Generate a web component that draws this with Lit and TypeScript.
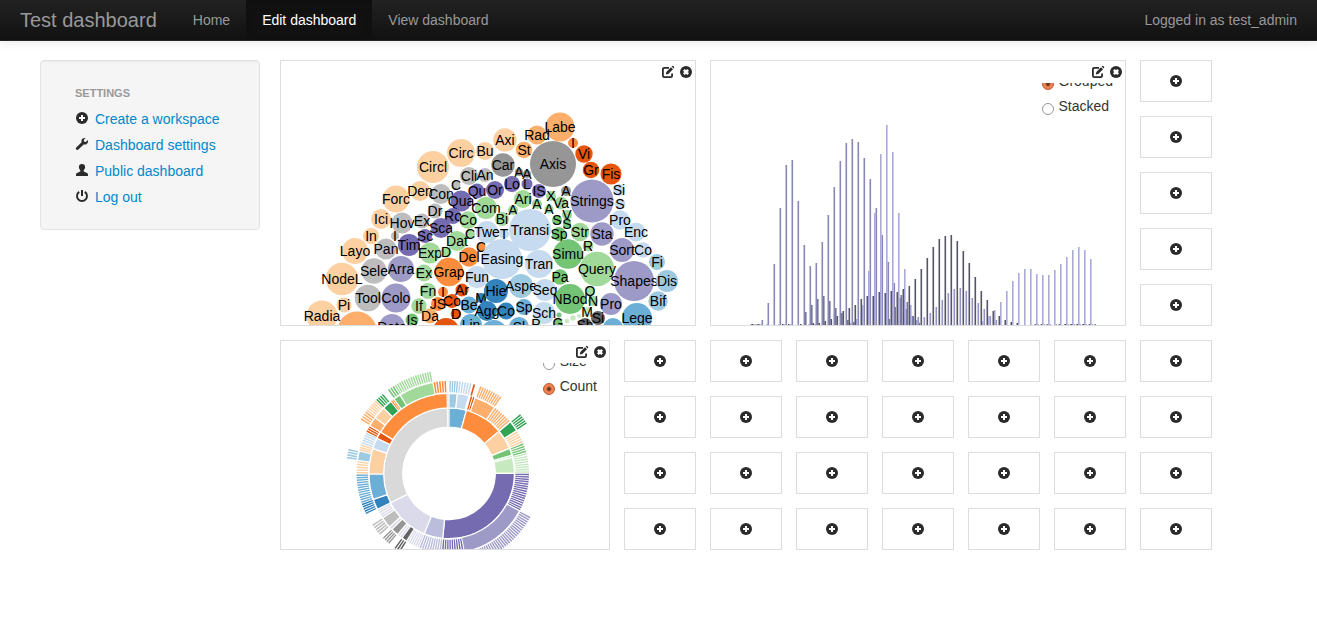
import { LitElement, html, svg, css } from "lit";
import { customElement, property } from "lit/decorators.js";

type Bubble = [string, number, number, number, string];

/* Palette: four shades each of blue, orange, green, purple and grey. */
const C: Record<string, string> = {
  b1: "#3182bd", b2: "#6baed6", b3: "#9ecae1", b4: "#c6dbef",
  o1: "#e6550d", o2: "#fd8d3c", o3: "#fdae6b", o4: "#fdd0a2",
  g1: "#31a354", g2: "#74c476", g3: "#a1d99b", g4: "#c7e9c0",
  p1: "#756bb1", p2: "#9e9ac8", p3: "#bcbddc", p4: "#dadaeb",
  k1: "#636363", k2: "#969696", k3: "#bdbdbd", k4: "#d9d9d9",
};

/* label, centre x, centre y, radius, colour */
const BUBBLES: Bubble[] = [
  ["Con", 441, 194, 10, "k3"], ["Den", 420, 191, 10, "o4"], ["Circl", 433, 167, 16, "o4"],
  ["Circ", 461, 153, 14, "o4"], ["Bu", 485, 151, 9, "o4"], ["Forc", 396, 199, 13.5, "o4"],
  ["Cli", 469, 176, 9, "k3"], ["An", 485, 175, 7, "k3"], ["C", 456, 185, 4.5, "k3"],
  ["Qu", 477, 191, 7.5, "p1"], ["Or", 495, 190, 9, "p1"], ["Qua", 461, 201, 10.5, "p1"],
  ["Com", 486, 208, 11, "g3"], ["Dr", 435, 211, 7.5, "k3"], ["Ro", 453, 216, 8, "p1"],
  ["Labe", 560, 127, 14.5, "o3"], ["Rad", 537, 135, 9.5, "o3"], ["Axi", 505, 140, 11.7, "o4"],
  ["St", 524, 150, 8.3, "o3"], ["Axis", 553, 164, 23, "k2"], ["I", 573, 143, 5, "o2"],
  ["Vi", 584, 154, 8.7, "o1"], ["Gr", 591, 170, 8.3, "o1"], ["Fis", 611, 174, 10.5, "o1"],
  ["Car", 503, 165, 11.7, "k2"], ["A", 519, 172, 4, "k2"], ["A", 527, 174, 4, "k2"],
  ["Lo", 512, 184, 8, "p1"], ["L", 527, 184, 5.5, "p1"], ["IS", 539, 191, 7, "p1"],
  ["A", 566, 191, 5, "k2"], ["X", 551, 196, 5, "g3"], ["Strings", 592, 201, 21.5, "p2"],
  ["Si", 619, 190, 6, "b4"], ["S", 620, 204, 5.5, "b4"], ["Ari", 523, 199, 9, "g3"],
  ["A", 537, 204, 5, "g3"], ["Va", 561, 203, 6.5, "g3"], ["A", 549, 209, 4.5, "g3"],
  ["A", 513, 210, 5, "g3"], ["Ici", 381, 219, 10, "o4"], ["Hov", 402, 223, 10.5, "k3"],
  ["Ex", 422, 221, 7.5, "k3"], ["Sca", 441, 228, 10, "p1"], ["Co", 468, 220, 8.7, "g3"],
  ["In", 371, 236, 8, "o4"], ["I", 395, 236, 4, "k3"], ["Tim", 409, 245, 11, "p1"],
  ["Sc", 425, 236, 7, "p1"], ["C", 470, 234, 5, "g3"], ["Dat", 457, 241, 10, "g3"],
  ["Twe", 487, 232, 11, "b4"], ["Layo", 355, 251, 13, "o4"], ["Pan", 386, 249, 10.5, "k3"],
  ["Exp", 430, 253, 10.5, "g3"], ["D", 446, 252, 5.5, "g3"], ["Del", 469, 257, 9.7, "o2"],
  ["C", 481, 247, 4.5, "o2"], ["NodeL", 342, 279, 16.3, "o4"], ["Sele", 374, 271, 12.7, "k3"],
  ["Arra", 401, 269, 13, "p2"], ["Ex", 424, 273, 8.5, "g3"], ["Grap", 449, 272, 14.3, "o2"],
  ["Fun", 477, 277, 11, "b4"], ["Tool", 368, 298, 13.3, "k3"], ["Colo", 396, 298, 14.5, "p2"],
  ["Fn", 428, 291, 8, "g3"], ["I", 443, 292, 5, "o2"], ["Ar", 462, 290, 6.5, "o1"],
  ["Pi", 344, 305, 7.5, "o4"], ["If", 419, 306, 7.7, "g3"], ["JS", 438, 304, 7, "o2"],
  ["Co", 452, 301, 7, "o1"], ["Be", 469, 305, 8.5, "b2"], ["M", 481, 298, 5, "b1"],
  ["Radia", 322, 316, 15.5, "o4"], ["", 357, 331, 19.5, "o3"], ["Data", 392, 327, 13, "p2"],
  ["Is", 412, 320, 6.5, "g2"], ["Da", 430, 316, 7.5, "o3"], ["D", 456, 314, 5.3, "o1"],
  ["", 446, 331, 13, "o1"], ["Lin", 471, 325, 11, "b2"], ["", 494, 333, 13, "b2"],
  ["Bi", 502, 219, 7, "g3"], ["S", 557, 220, 5, "g2"], ["V", 567, 215, 5, "g3"],
  ["S", 567, 224, 4, "g2"], ["T", 504, 234, 5, "b4"], ["Transi", 530, 230, 21, "b4"],
  ["Sp", 559, 234, 7, "g2"], ["Str", 580, 232, 9.3, "g3"], ["Sta", 602, 234, 11.7, "p2"],
  ["Pro", 620, 220, 9.7, "b4"], ["Enc", 636, 232, 9.5, "b4"], ["Simu", 568, 254, 14.7, "g2"],
  ["R", 588, 246, 5.3, "g3"], ["Sort", 622, 250, 12, "p2"], ["Co", 643, 250, 7.7, "b4"],
  ["Easing", 502, 259, 20, "b4"], ["Tran", 539, 264, 14, "b4"], ["Query", 597, 269, 17.3, "g3"],
  ["Fi", 657, 262, 8, "b3"], ["Shapes", 634, 281, 20, "p2"], ["Dis", 667, 281, 11, "b3"],
  ["Pa", 560, 277, 7.7, "g2"], ["Hie", 496, 291, 12, "b1"], ["Aspe", 521, 286, 12, "b3"],
  ["Seq", 545, 290, 11, "b4"], ["NBod", 570, 299, 15, "g2"], ["O", 590, 291, 5, "g3"],
  ["N", 593, 301, 5, "g3"], ["Pro", 611, 304, 11, "p2"], ["Bif", 658, 301, 9.7, "b3"],
  ["Agg", 487, 311, 10, "b1"], ["Co", 506, 311, 8.5, "b1"], ["Sp", 524, 307, 8, "b2"],
  ["Sch", 544, 313, 11, "b4"], ["M", 587, 312, 5, "g4"], ["Si", 598, 318, 7, "k1"],
  ["Sh", 585, 325, 7, "k1"], ["Lege", 637, 318, 15, "b2"], ["", 613, 328, 10, "b2"],
  ["G", 558, 323, 4.5, "g2"], ["Sl", 519, 327, 10, "b2"], ["P", 536, 324, 4.5, "b4"],
  ["", 559, 315, 2.5, "g2"], ["", 567, 321, 2.3, "g4"], ["", 573, 318, 2.7, "g4"], ["", 579, 316, 2, "g4"],
];

/* Each run of bars: colour, first x, then heights at six-unit steps. */
const BARS: [string, number, number[]][] = [
  ["#8888b6", 761.5, [5, 22, 61, 117, 160, 165, 124, 80, 59, 62, 83, 110, 138, 164, 182, 186, 183, 167, 146, 117, 90, 63, 42, 27, 16, 9, 4]],
  ["#aaaadd", 850, [2, 6, 20, 54, 112, 171, 200, 173, 112, 56, 20, 5]],
  ["#777799", 805, [13, 20, 26, 29, 24, 17, 12, 5, 3]],
  ["#555566", 812.5, [2, 2, 4, 6, 9, 14, 17, 20, 26, 29, 29, 33, 32, 34, 33, 36, 39, 46, 56, 67, 78, 86, 89, 90, 84, 74, 62, 48, 34, 25, 14, 9, 5, 3, 2]],
  ["#777799", 888.5, [6, 18, 30, 23, 9, 2]],
  ["#9494c4", 917.5, [8, 8, 12, 18, 25, 32, 36, 37, 34, 27, 22, 16, 9, 5]],
  ["#aaaadd", 982, [4, 9, 15, 23, 34, 44, 52, 56, 56, 51, 50, 50, 55, 61, 68, 75, 78, 75, 66]],
  ["#8888aa", 750.5, [1, 1]],
  ["#aaaadd", 754.3, [1, 1, 1, 0, 1, 1, 1, 0, 0, 1, 1]],
  ["#555566", 752, [1, 1, 0, 0, 0, 1, 1, 0, 1]],
  ["#777788", 1034.5, [1, 1, 1, 0, 1, 1, 1, 1, 1, 1, 1]],
  ["#aaaadd", 1037.5, [1, 1, 1, 1, 0, 1, 1, 1, 1, 1]],
  ["#555566", 1064.5, [1, 1, 1, 1]],
];

/* Sunburst slices: ring, start angle, end angle, colour, drawn as thin leaves. */
const SLICES: [number, number, number, string, boolean][] = [
  [1, 0, 15.5, "b2", false], [1, 15.5, 50, "o2", false], [1, 50, 67.6, "o4", false],
  [1, 67.6, 74, "g2", false], [1, 74, 76, "g4", false], [1, 76, 90, "g4", false],
  [1, 90, 185.5, "p1", false], [1, 185.5, 202.3, "p3", false], [1, 202.3, 243.3, "p4", false],
  [1, 243.3, 358.6, "k4", false],
  [2, 0, 6, "b3", false], [2, 6, 14.3, "b4", false], [2, 15.5, 19, "o1", true],
  [2, 19, 34.8, "o3", false], [2, 35, 49.5, "o3", true], [2, 50, 57.7, "g1", false],
  [2, 58, 67.6, "o4", true], [2, 67.6, 75, "g2", true], [2, 75, 90, "g4", true],
  [2, 90, 118, "p1", true], [2, 118, 169, "p2", false], [2, 169, 185.5, "p1", true],
  [2, 185.5, 202, "p3", true], [2, 202, 212, "p4", true], [2, 212, 216, "k1", false],
  [2, 216, 220, "p4", true], [2, 220, 225.5, "k2", false], [2, 225.5, 228, "p4", true],
  [2, 228, 236, "k3", false], [2, 236, 243.3, "p4", true], [2, 243.3, 251, "b1", false],
  [2, 251, 269.5, "b2", false], [2, 269.5, 288, "o4", false], [2, 288, 296, "b4", false],
  [2, 296, 301, "o1", false], [2, 301, 358.6, "o2", false],
  [3, 0, 6, "b3", true], [3, 6, 14.5, "b4", true], [3, 15, 16.8, "o1", true],
  [3, 19.5, 34.8, "o3", true], [3, 50, 57.7, "g1", true], [3, 118, 169, "p2", true],
  [3, 211.5, 216.5, "k1", true], [3, 220, 226, "k2", true], [3, 228, 236.5, "k3", true],
  [3, 243.5, 251, "b1", true], [3, 251, 269.5, "b2", true], [3, 269.5, 278, "o4", true],
  [3, 278, 284, "b3", false], [3, 284, 288.5, "o4", true], [3, 288.5, 296.5, "b4", true],
  [3, 296.5, 301, "o1", true], [3, 301, 307, "o3", false], [3, 307, 315, "o4", false],
  [3, 315, 321, "g1", false], [3, 321, 323.5, "o2", true], [3, 323.5, 328, "g2", false],
  [3, 328, 350, "g3", false], [3, 350, 358.5, "o2", true],
  [4, 278, 284, "b3", true], [4, 301, 307, "o3", true], [4, 307, 315, "o4", true],
  [4, 315, 320.5, "g1", true], [4, 323.5, 328, "g2", true], [4, 328, 350, "g3", true],
];
const RING = [0, 46.3, 65.4, 80, 92.4, 103.3];

function wedge(r0: number, r1: number, a0: number, a1: number): string {
  const pt = (r: number, a: number) => {
    const t = (a * Math.PI) / 180;
    return `${(449 + r * Math.sin(t)).toFixed(2)} ${(473.3 - r * Math.cos(t)).toFixed(2)}`;
  };
  return `M${pt(r0, a0)}L${pt(r1, a0)}A${r1} ${r1} 0 0 1 ${pt(r1, a1)}L${pt(r0, a1)}A${r0} ${r0} 0 0 0 ${pt(r0, a0)}Z`;
}

function slicePath([ring, a0, a1, , leaves]: (typeof SLICES)[number]): string {
  const r0 = RING[ring];
  const r1 = RING[ring + 1];
  if (!leaves) return wedge(r0, r1, a0, a1);
  const length = ((a1 - a0) * Math.PI * r1) / 180;
  const n = Math.max(1, Math.round(length / 2.5));
  const step = (a1 - a0) / n;
  let d = "";
  for (let i = 0; i < n; i++) d += wedge(r0 + 1, r1, a0 + step * (i + 0.2), a0 + step * (i + 0.8));
  return d;
}

const bubbleChart = () => html`
  <svg class="chart" viewBox="281 83 414 242" role="img" aria-label="Bubble chart">
    ${BUBBLES.map(
      ([label, x, y, r, c]) => svg`<g><circle cx=${x} cy=${y} r=${r} fill=${C[c]}></circle>
        <text x=${x} y=${y + 5} text-anchor="middle">${label}</text></g>`,
    )}
  </svg>`;

const barChart = () => html`
  <svg class="chart" viewBox="711 83 414 242" role="img" aria-label="Bar chart">
    ${BARS.map(([c, x0, hs]) =>
      hs.map((h, i) => svg`<rect x=${x0 + i * 6} y=${325 - h} width="1.6" height=${h} fill=${c}></rect>`),
    )}
  </svg>`;

const sunburst = () => html`
  <svg class="chart" viewBox="281 363 328 186" role="img" aria-label="Sunburst chart">
    ${SLICES.map(
      (s) => svg`<path d=${slicePath(s)} fill=${C[s[3]]} stroke=${s[4] ? "none" : "#fff"} stroke-width="1.2"></path>`,
    )}
    <path d=${wedge(46.5, 80, 358.8, 359.8)} fill="#e4e9ec"></path>
  </svg>`;

@customElement("glyph-icon")
export class GlyphIcon extends LitElement {
  @property() name = "plus";

  static styles = css`
    :host { display: inline-flex; width: 14px; height: 14px; color: #2b2b2b; }
    svg { width: 14px; height: 14px; fill: currentColor; }
  `;

  private shape() {
    switch (this.name) {
      case "wrench":
        return svg`<path d="M12.9 3.1 10.8 5 9 4.4 8.7 2.9 10.7 1C8.9 0.6 7 1.5 6.5 3.2C6.3 4 6.4 4.7 6.6 5.3L1.3 10.4C0.7 11 0.7 11.9 1.2 12.5C1.8 13.1 2.8 13.1 3.4 12.5L8.6 7.4C9.5 7.7 10.5 7.7 11.4 7.2C12.9 6.4 13.4 4.7 12.9 3.1Z"></path>`;
      case "user":
        return svg`<path d="M7 1C5 1 3.9 2.3 3.9 4.1C3.9 5.4 4.5 6.5 5.3 7.3V8.6L2 10.1C1.2 10.5 1 11 1 12V13H13V12C13 11 12.8 10.5 12 10.1L8.7 8.6V7.3C9.5 6.5 10.1 5.4 10.1 4.1C10.1 2.3 9 1 7 1Z"></path>`;
      case "power":
        return svg`<path d="M4.2 2.9A5 5 0 1 0 9.8 2.9" fill="none" stroke="currentColor" stroke-width="1.9"></path>
          <rect x="6" y="1" width="2" height="6"></rect>`;
      case "edit":
        return svg`<path d="M8 2.8H3.5Q1.9 2.8 1.9 4.4V10.5Q1.9 12.1 3.5 12.1H9.5Q11.1 12.1 11.1 10.5V8.5" fill="none" stroke="currentColor" stroke-width="1.8"></path>
          <path d="M4.8 9.4 5.3 6.9 10 2.2 12 4.2 7.3 8.9ZM10.7 1.6 11.3 1Q11.9 0.6 12.5 1.2L13 1.7Q13.5 2.3 13 2.9L12.5 3.4Z"></path>`;
      case "remove":
        return svg`<circle cx="7" cy="7" r="6"></circle>
          <path d="M4.9 4.9 9.1 9.1M9.1 4.9 4.9 9.1" stroke="#fff" stroke-width="2.6"></path>`;
      default:
        return svg`<circle cx="7" cy="7" r="6"></circle>
          <path d="M7 4V10M4 7H10" stroke="#fff" stroke-width="2"></path>`;
    }
  }

  render() {
    return html`<svg viewBox="0 0 14 14" aria-hidden="true">${this.shape()}</svg>`;
  }
}

@customElement("app-root")
export class AppRoot extends LitElement {
  static styles = css`
    :host {
      display: block;
      font: 14px/20px "Liberation Sans", Arial, sans-serif;
      color: #333;
      background: #fff;
    }
    .navbar {
      display: flex;
      background: linear-gradient(#222, #111);
      border-bottom: 1px solid #252525;
      box-shadow: 0 1px 10px rgba(0, 0, 0, 0.1);
      padding: 0 20px;
    }
    .navbar a { color: #999; text-decoration: none; padding: 10px 16px; }
    .navbar .brand { font-size: 20px; padding: 10px 20px 10px 0; }
    .navbar a.active {
      color: #fff;
      background: #111;
      box-shadow: inset 0 3px 8px rgba(0, 0, 0, 0.125);
    }
    .login { margin: 0 0 0 auto; padding: 10px 0; color: #999; }
    .page { display: flex; align-items: flex-start; gap: 20px; padding: 19px 40px; }
    .well {
      flex: 0 0 220px;
      box-sizing: border-box;
      padding: 19px;
      background: #f5f5f5;
      border: 1px solid #e3e3e3;
      border-radius: 4px;
      box-shadow: inset 0 1px 1px rgba(0, 0, 0, 0.05);
    }
    .well h2, .well a { display: flex; margin: 0; padding: 3px 15px; white-space: nowrap; }
    .well h2 {
      font-size: 11px;
      color: #999;
      text-transform: uppercase;
      text-shadow: 0 1px 0 rgba(255, 255, 255, 0.5);
    }
    .well a { color: #08c; text-decoration: none; gap: 6px; }
    .well glyph-icon { margin-top: 2px; }
    .grid {
      display: grid;
      grid-template-columns: repeat(11, 72px);
      grid-auto-rows: 42px;
      grid-auto-flow: dense;
      gap: 14px;
    }
    .widget { display: flex; flex-direction: column; border: 1px solid #ddd; overflow: hidden; }
    .wide { grid-column: span 5; grid-row: span 5; }
    .narrow { grid-column: 1 / span 4; grid-row: 6 / span 4; }
    .tools { display: flex; justify-content: flex-end; gap: 4px; padding: 4px 2px; }
    .body { position: relative; flex: 1; min-height: 0; overflow: hidden; }
    button {
      display: flex;
      align-items: center;
      justify-content: center;
      padding: 0;
      border: 0;
      background: none;
      font: inherit;
      cursor: pointer;
    }
    .add { border: 1px solid #ddd; background: #fff; }
    .chart { display: block; width: 100%; height: 100%; }
    .chart text { font-size: 14px; fill: #000; }
    .options { position: absolute; top: -12px; right: 12px; display: grid; gap: 5px; }
    .options label { display: flex; gap: 5px; }
    .options input {
      appearance: none;
      box-sizing: border-box;
      width: 12px;
      height: 12px;
      margin: 7px 0 0;
      border: 1px solid #999;
      border-radius: 50%;
      background: #fff;
    }
    .options input:checked {
      border-color: #b8572f;
      background: radial-gradient(circle, #5a3420 0 1px, #f4824e 3px);
    }
  `;

  private widget(kind: string, chart: unknown, group = "", options: string[] = [], selected = "") {
    return html`<section class="widget ${kind}">
      <div class="tools">
        <button aria-label="Edit"><glyph-icon name="edit"></glyph-icon></button>
        <button aria-label="Remove"><glyph-icon name="remove"></glyph-icon></button>
      </div>
      <div class="body">
        ${chart}
        ${options.length
          ? html`<form class="options">
              ${options.map(
                (o) => html`<label><input type="radio" name=${group} ?checked=${o === selected} />${o}</label>`,
              )}
            </form>`
          : ""}
      </div>
    </section>`;
  }

  render() {
    const links = [
      ["plus", "Create a workspace"],
      ["wrench", "Dashboard settings"],
      ["user", "Public dashboard"],
      ["power", "Log out"],
    ];
    return html`
      <nav class="navbar">
        <a class="brand" href="#">Test dashboard</a>
        <a href="#">Home</a>
        <a class="active" href="#">Edit dashboard</a>
        <a href="#">View dashboard</a>
        <p class="login">Logged in as test_admin</p>
      </nav>
      <div class="page">
        <aside class="well">
          <h2>Settings</h2>
          ${links.map(([icon, text]) => html`<a href="#"><glyph-icon name=${icon}></glyph-icon>${text}</a>`)}
        </aside>
        <main class="grid">
          ${this.widget("wide", bubbleChart())}
          ${this.widget("wide", barChart(), "layout", ["Grouped", "Stacked"], "Grouped")}
          ${this.widget("narrow", sunburst(), "measure", ["Size", "Count"], "Count")}
          ${Array.from(
            { length: 33 },
            () => html`<button class="add" aria-label="Add widget"><glyph-icon name="plus"></glyph-icon></button>`,
          )}
        </main>
      </div>
    `;
  }
}
